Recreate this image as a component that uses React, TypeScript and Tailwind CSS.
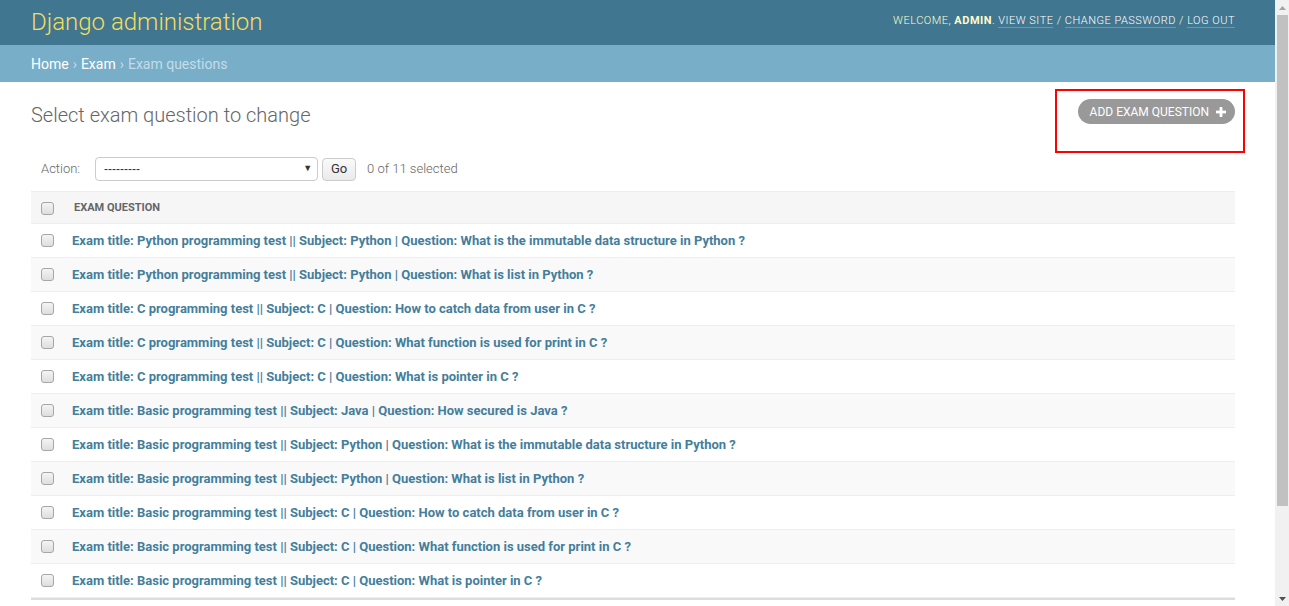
import React from "react";

const rows = [
  "Exam title: Python programming test || Subject: Python | Question: What is the immutable data structure in Python ?",
  "Exam title: Python programming test || Subject: Python | Question: What is list in Python ?",
  "Exam title: C programming test || Subject: C | Question: How to catch data from user in C ?",
  "Exam title: C programming test || Subject: C | Question: What function is used for print in C ?",
  "Exam title: C programming test || Subject: C | Question: What is pointer in C ?",
  "Exam title: Basic programming test || Subject: Java | Question: How secured is Java ?",
  "Exam title: Basic programming test || Subject: Python | Question: What is the immutable data structure in Python ?",
  "Exam title: Basic programming test || Subject: Python | Question: What is list in Python ?",
  "Exam title: Basic programming test || Subject: C | Question: How to catch data from user in C ?",
  "Exam title: Basic programming test || Subject: C | Question: What function is used for print in C ?",
  "Exam title: Basic programming test || Subject: C | Question: What is pointer in C ?",
];

function Checkbox() {
  return (
    <div className="w-[13px] h-[13px] rounded-[3px] border border-[#a6a6a6] bg-gradient-to-b from-[#f4f4f4] to-[#dedede] shrink-0" />
  );
}

export default function App() {
  return (
    <div
      className="relative flex h-[606px] w-[1289px] overflow-hidden bg-white"
      style={{ fontFamily: "Roboto, 'Liberation Sans', sans-serif" }}
    >
      <div className="flex-1 flex flex-col min-w-0">
        {/* Header */}
        <div className="h-[45px] bg-[#417690] flex items-center justify-between pl-[31px] pr-[40px]">
          <div className="text-[24px] font-light text-[#f5dd5d] leading-none -mt-[2px]">
            Django administration
          </div>
          <div className="text-[11px] font-light tracking-[0.5px] uppercase text-[#ffc] -mt-[2px]">
            WELCOME, <span className="font-bold">ADMIN</span>.{" "}
            <span className="text-white border-b border-white/25">VIEW SITE</span> /{" "}
            <span className="text-white border-b border-white/25">CHANGE PASSWORD</span> /{" "}
            <span className="text-white border-b border-white/25">LOG OUT</span>
          </div>
        </div>
        {/* Breadcrumbs */}
        <div className="h-[37px] bg-[#79aec8] flex items-center pl-[31px] pt-[1px] text-[14px]">
          <span className="text-white">Home</span>
          <span className="text-[#c4dce8] mx-[4px]">›</span>
          <span className="text-white">Exam</span>
          <span className="text-[#c4dce8] mx-[4px]">›</span>
          <span className="text-[#c4dce8]">Exam questions</span>
        </div>
        {/* Content */}
        <div className="pl-[31px] pr-[40px] pt-[17px]">
          <div className="flex items-start justify-between">
            <h1 className="mt-[4px] text-[20px] leading-[24px] font-light text-[#666]">
              Select exam question to change
            </h1>
            <div className="h-[25px] rounded-full bg-[#999] flex items-center pl-[12px] pr-[9px] text-[12px] text-white uppercase">
              <span>ADD EXAM QUESTION</span>
              <svg width="10" height="10" viewBox="0 0 10 10" className="ml-[7px]">
                <rect x="3.6" y="0" width="2.8" height="10" fill="white" />
                <rect x="0" y="3.6" width="10" height="2.8" fill="white" />
              </svg>
            </div>
          </div>
          {/* Action bar */}
          <div className="mt-[30px] h-[24px] flex items-center pl-[10px] text-[13px] text-[#666]">
            <span className="font-light">Action:</span>
            <div className="ml-[15px] w-[223px] h-[24px] rounded-[4px] border border-[#ccc] bg-white flex items-center justify-between pl-[8px] pr-[5px] text-[#333]">
              <span className="text-[12px] leading-none" style={{ fontFamily: "'Liberation Sans', sans-serif" }}>---------</span>
              <span className="text-[9px] text-[#333]">▼</span>
            </div>
            <div className="ml-[4px] w-[34px] h-[23px] rounded-[4px] border border-[#ccc] bg-gradient-to-b from-[#fafafa] to-[#eaeaea] flex items-center justify-center text-[13px] text-[#333]">
              Go
            </div>
            <span className="ml-[11px] font-light">0 of 11 selected</span>
          </div>
          {/* Table */}
          <div className="mt-[10px]">
            <div className="h-[33px] bg-[#f6f6f6] border-t border-b border-[#eee] flex items-center pl-[10px] pt-[1px]">
              <Checkbox />
              <span className="ml-[20px] text-[11px] font-bold text-[#666] uppercase">EXAM QUESTION</span>
            </div>
            {rows.map((r, i) => (
              <div
                key={i}
                className={
                  "h-[34px] border-b border-[#eee] flex items-center pl-[10px] " +
                  (i % 2 === 1 ? "bg-[#f9f9f9]" : "bg-white")
                }
              >
                <Checkbox />
                <span className="ml-[18px] text-[13px] font-bold text-[#447e9b] whitespace-nowrap">{r}</span>
              </div>
            ))}
            <div className="h-[2px] bg-[#ddd]" />
          </div>
        </div>
      </div>
      {/* Scrollbar */}
      <div className="w-[14px] h-full bg-[#f1f1f1] flex flex-col items-center shrink-0">
        <div className="h-[15px] w-full flex items-center justify-center">
          <svg width="7" height="4" viewBox="0 0 7 4"><polygon points="3.5,0 7,4 0,4" fill="#a3a3a3" /></svg>
        </div>
        <div className="w-[11px] h-[491px] bg-[#c1c1c1]" />
        <div className="flex-1" />
        <div className="h-[15px] w-full flex items-center justify-center">
          <svg width="7" height="4" viewBox="0 0 7 4"><polygon points="0,0 7,0 3.5,4" fill="#505050" /></svg>
        </div>
      </div>
      {/* Red annotation box */}
      <div className="absolute left-[1055px] top-[89px] w-[190px] h-[64px] border-2 border-[#f00]" />
    </div>
  );
}
